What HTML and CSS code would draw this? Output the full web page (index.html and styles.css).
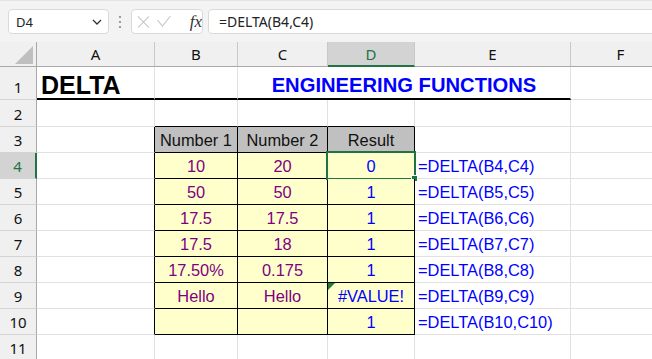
FILE: index.html
```html
<!DOCTYPE html>
<html lang="en">
<head>
  <meta charset="UTF-8">
  <title>DELTA</title>
  <link rel="stylesheet" href="styles.css">
</head>
<body>

<div class="toolbar">
  <div class="namebox">
    <span>D4</span>
    <svg width="10" height="6" viewBox="0 0 10 6"><polyline points="1,1 5,5 9,1" fill="none" stroke="#333" stroke-width="1.3"/></svg>
  </div>
  <div class="grip">
    <svg width="4" height="14" viewBox="0 0 4 14"><circle cx="2" cy="2" r="1.1" fill="#888"/><circle cx="2" cy="7" r="1.1" fill="#888"/><circle cx="2" cy="12" r="1.1" fill="#888"/></svg>
  </div>
  <div class="fxbox">
    <svg width="14" height="14" viewBox="0 0 14 14"><path d="M1 1L13 13M13 1L1 13" stroke="#c8c8c8" stroke-width="1.2" fill="none"/></svg>
    <svg width="15" height="13" viewBox="0 0 15 13"><path d="M0.5 5L6 11.5L14.5 0.5" stroke="#c8c8c8" stroke-width="1.2" fill="none"/></svg>
    <span class="fx">fx</span>
  </div>
  <div class="formula">=DELTA(B4,C4)</div>
</div>

<div class="sheet">
  <!-- column headers -->
  <div class="corner"><svg width="18" height="18" viewBox="0 0 18 18"><polygon points="18,0 18,18 0,18" fill="#bfbfbf"/></svg></div>
  <div class="ch">A</div>
  <div class="ch">B</div>
  <div class="ch">C</div>
  <div class="ch active">D</div>
  <div class="ch">E</div>
  <div class="ch">F</div>

  <!-- row 1 -->
  <div class="rh">1</div>
  <div class="c thick title">DELTA</div>
  <div class="c thick"></div>
  <div class="c thick subtitle">ENGINEERING FUNCTIONS</div>
  <div class="c"></div>

  <!-- row 2 -->
  <div class="rh">2</div>
  <div class="c"></div>
  <div class="c top"></div>
  <div class="c top"></div>
  <div class="c top"></div>
  <div class="c"></div>
  <div class="c"></div>

  <!-- row 3 -->
  <div class="rh">3</div>
  <div class="c left"></div>
  <div class="c t head">Number 1</div>
  <div class="c t head">Number 2</div>
  <div class="c t head">Result</div>
  <div class="c"></div>
  <div class="c"></div>

  <!-- row 4 -->
  <div class="rh active">4</div>
  <div class="c left"></div>
  <div class="c t val">10</div>
  <div class="c t val">20</div>
  <div class="c t res sel">0</div>
  <div class="c f">=DELTA(B4,C4)</div>
  <div class="c"></div>

  <!-- row 5 -->
  <div class="rh">5</div>
  <div class="c left"></div>
  <div class="c t val">50</div>
  <div class="c t val">50</div>
  <div class="c t res">1</div>
  <div class="c f">=DELTA(B5,C5)</div>
  <div class="c"></div>

  <!-- row 6 -->
  <div class="rh">6</div>
  <div class="c left"></div>
  <div class="c t val">17.5</div>
  <div class="c t val">17.5</div>
  <div class="c t res">1</div>
  <div class="c f">=DELTA(B6,C6)</div>
  <div class="c"></div>

  <!-- row 7 -->
  <div class="rh">7</div>
  <div class="c left"></div>
  <div class="c t val">17.5</div>
  <div class="c t val">18</div>
  <div class="c t res">1</div>
  <div class="c f">=DELTA(B7,C7)</div>
  <div class="c"></div>

  <!-- row 8 -->
  <div class="rh">8</div>
  <div class="c left"></div>
  <div class="c t val">17.50%</div>
  <div class="c t val">0.175</div>
  <div class="c t res">1</div>
  <div class="c f">=DELTA(B8,C8)</div>
  <div class="c"></div>

  <!-- row 9 -->
  <div class="rh">9</div>
  <div class="c left"></div>
  <div class="c t val">Hello</div>
  <div class="c t val">Hello</div>
  <div class="c t res err">#VALUE!</div>
  <div class="c f">=DELTA(B9,C9)</div>
  <div class="c"></div>

  <!-- row 10 -->
  <div class="rh">10</div>
  <div class="c left"></div>
  <div class="c t val"></div>
  <div class="c t val"></div>
  <div class="c t res">1</div>
  <div class="c f">=DELTA(B10,C10)</div>
  <div class="c"></div>

  <!-- row 11 -->
  <div class="rh">11</div>
  <div class="c"></div>
  <div class="c"></div>
  <div class="c"></div>
  <div class="c"></div>
  <div class="c"></div>
  <div class="c"></div>
</div>

</body>
</html>
```

FILE: styles.css
```css
body {
  margin: 0;
  background-color: #fff;
  font-family: "Liberation Sans", Arial, sans-serif;
  overflow: hidden;
}

.toolbar {
  display: flex;
  align-items: center;
  height: 42px;
  box-sizing: border-box;
  padding: 8px 0 8px 8px;
  background-color: #f3f3f3;
  border-top: 1px solid #e3e3e3;
  font-family: "Noto Sans", sans-serif;
  font-size: 13px;
  color: #222;
}

.namebox {
  width: 101px;
  height: 25px;
  box-sizing: border-box;
  display: flex;
  align-items: center;
  justify-content: space-between;
  padding: 0 6px 0 7px;
  background-color: #fff;
  border: 1px solid #dadada;
  border-radius: 4px;
}

.grip {
  width: 22px;
  display: flex;
  justify-content: center;
}

.fxbox {
  width: 72px;
  height: 25px;
  box-sizing: border-box;
  display: flex;
  align-items: center;
  gap: 7px;
  padding-left: 5px;
  background-color: #fff;
  border: 1px solid #dadada;
  border-radius: 4px;
}

.fx {
  margin-left: 12px;
  font-family: "Liberation Serif", serif;
  font-style: italic;
  font-size: 17px;
  color: #333;
}

.formula {
  flex: 1;
  height: 25px;
  box-sizing: border-box;
  margin-left: 5px;
  margin-right: -6px;
  padding-left: 10px;
  font-size: 14px;
  line-height: 23px;
  background-color: #fff;
  border: 1px solid #dadada;
  border-radius: 4px;
}

.sheet {
  display: grid;
  grid-template-columns: 37px 118px 83px 90px 87px 156px 100px;
  grid-template-rows: 25px 33px 27px repeat(9, 26px);
}

.sheet > div {
  box-sizing: border-box;
  display: flex;
  align-items: flex-end;
  white-space: nowrap;
}

.corner {
  background-color: #f0f0f0;
  border-right: 1px solid #a8a8a8;
  border-bottom: 1px solid #a8a8a8;
  padding: 0 3px 2px 0;
  justify-content: flex-end;
}

.ch {
  justify-content: center;
  background-color: #f0f0f0;
  border-right: 1px solid #c8c8c8;
  border-bottom: 1px solid #a8a8a8;
  font-family: "Noto Sans", sans-serif;
  font-size: 15px;
  line-height: 20px;
  padding-bottom: 2px;
  color: #111;
}

.ch.active {
  background-color: #d3d3d3;
  border-bottom: 2px solid #217346;
  color: #217346;
  padding-bottom: 1px;
}

.rh {
  justify-content: center;
  background-color: #f0f0f0;
  border-right: 1px solid #a8a8a8;
  border-bottom: 1px solid #d4d4d4;
  font-family: "Noto Sans", sans-serif;
  font-size: 15px;
  line-height: 20px;
  padding-bottom: 2px;
  color: #111;
}

.rh.active {
  background-color: #d3d3d3;
  border-right: 2px solid #217346;
  color: #217346;
}

.c {
  border-right: 1px solid #e1e1e1;
  border-bottom: 1px solid #e1e1e1;
  font-size: 16.4px;
  line-height: 20px;
  padding-bottom: 2px;
}

.thick {
  border-bottom: 2px solid #000;
}

.title {
  font-size: 25px;
  font-weight: bold;
  line-height: 26px;
  padding: 0 0 0 4px;
}

.subtitle {
  grid-column: span 3;
  justify-content: center;
  font-size: 20.2px;
  font-weight: bold;
  line-height: 22px;
  color: #0000ff;
}

.top {
  border-bottom-color: #000;
}

.left {
  border-right-color: #000;
}

.t {
  justify-content: center;
  border-right-color: #000;
  border-bottom-color: #000;
}

.head {
  background-color: #c0c0c0;
  color: #111;
}

.val {
  background-color: #ffffcc;
  color: #800080;
}

.res {
  background-color: #ffffcc;
  color: #0000ff;
  position: relative;
}

.f {
  padding-left: 3px;
  color: #0000ff;
}

.sel::before {
  content: "";
  position: absolute;
  top: -2px;
  left: -2px;
  right: -2px;
  bottom: -2px;
  border: 2px solid #217346;
}

.sel::after {
  content: "";
  position: absolute;
  right: -4px;
  bottom: -4px;
  width: 5px;
  height: 5px;
  background-color: #217346;
  border: 1px solid #fff;
}

.err::before {
  content: "";
  position: absolute;
  top: 0;
  left: 0;
  border-top: 7px solid #1e7b34;
  border-right: 7px solid transparent;
}
```
